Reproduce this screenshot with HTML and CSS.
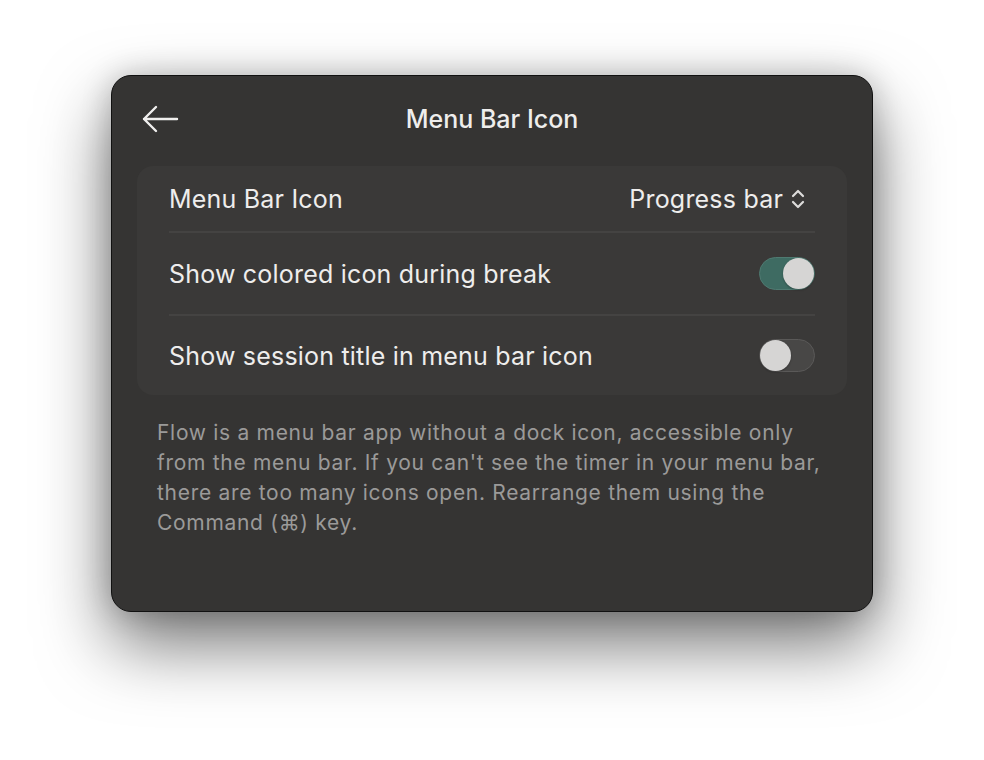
FILE: index.html
```html
<!DOCTYPE html>
<html>
<head>
<meta charset="utf-8">
<link rel="stylesheet" href="styles.css">
</head>
<body>
<div class="window">
  <div class="header">
    <svg class="back" width="38" height="30" viewBox="0 0 38 30">
      <path d="M36 15 H3 M15 3 L3 15 L15 27" fill="none" stroke="#f0efee" stroke-width="2.4" stroke-linecap="round" stroke-linejoin="round"/>
    </svg>
    <div class="title">Menu Bar Icon</div>
  </div>
  <div class="card">
    <div class="row row-first">
      <span class="label">Menu Bar Icon</span>
      <span class="select">Progress bar
        <svg class="chev" width="14" height="22" viewBox="0 0 14 22">
          <path d="M2 8 L7 3 L12 8 M2 14 L7 19 L12 14" fill="none" stroke="#dddcdb" stroke-width="2.2" stroke-linecap="round" stroke-linejoin="round"/>
        </svg>
      </span>
    </div>
    <div class="sep"></div>
    <div class="row">
      <span class="label">Show colored icon during break</span>
      <span class="toggle on"><span class="knob"></span></span>
    </div>
    <div class="sep"></div>
    <div class="row row-last">
      <span class="label">Show session title in menu bar icon</span>
      <span class="toggle off"><span class="knob"></span></span>
    </div>
  </div>
  <p class="note">Flow is a menu bar app without a dock icon, accessible only from the menu bar. If you can't see the timer in your menu bar, there are too many icons open. Rearrange them using the Command (⌘) key.</p>
</div>
</body>
</html>
```

FILE: styles.css
```css
html, body {
  margin: 0;
  padding: 0;
  background: #ffffff;
}
body {
  box-sizing: border-box;
  min-height: 760px;
  padding: 75px 0 0 111px;
  font-family: Inter, "Noto Sans", "DejaVu Sans", sans-serif;
}
.window {
  width: 762px;
  height: 537px;
  box-sizing: border-box;
  background: #353433;
  border: 1px solid #111;
  border-radius: 20px;
  box-shadow: 0 32px 70px rgba(0,0,0,0.55), 0 0 30px rgba(0,0,0,0.2);
  padding: 0 25px 0 25px;
}
.header {
  position: relative;
  height: 90px;
  display: flex;
  align-items: center;
  justify-content: center;
}
.back {
  position: absolute;
  left: 4px;
  top: 28px;
}
.title {
  color: #eeedec;
  font-size: 25px;
  font-weight: 500;
  letter-spacing: 0;
  margin-top: -4px;
}
.card {
  background: #3a3938;
  border-radius: 16px;
  padding: 0 32px;
}
.row {
  display: flex;
  align-items: center;
  justify-content: space-between;
  height: 81px;
}
.row-first { height: 65px; }
.row-last { height: 79px; }
.label {
  color: #eeedec;
  font-size: 25px;
  letter-spacing: 0.2px;
}
.select {
  color: #eeedec;
  font-size: 25px;
  letter-spacing: 0.2px;
  display: flex;
  align-items: center;
  gap: 8px;
  margin-right: 10px;
}
.chev { display: block; }
.sep {
  height: 2px;
  background: #444342;
}
.toggle {
  width: 56px;
  height: 33px;
  border-radius: 17px;
  box-sizing: border-box;
  position: relative;
  display: block;
}
.toggle.on {
  background: #3e6b62;
  border: 1px solid #4f7a71;
}
.toggle.off {
  background: #484746;
  border: 1px solid #5a5958;
}
.knob {
  position: absolute;
  top: 0px;
  width: 31px;
  height: 31px;
  border-radius: 50%;
  background: #d6d5d4;
  box-shadow: 0 1px 2px rgba(0,0,0,0.3);
}
.toggle.on .knob { right: 0px; }
.toggle.off .knob { left: 0px; }
.note {
  margin: 23px 0 0 20px;
  color: #9b9a99;
  font-size: 21px;
  line-height: 30px;
  letter-spacing: 0.7px;
  width: 680px;
}
```
